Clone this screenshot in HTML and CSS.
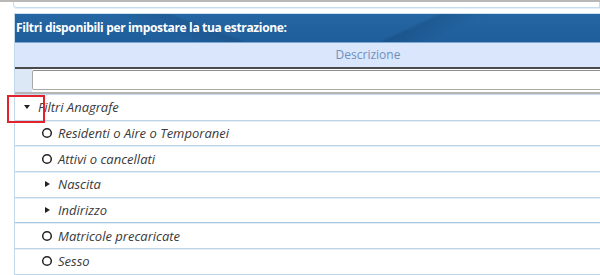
FILE: index.html
```html
<!DOCTYPE html>
<html lang="it">
<head>
	<meta charset="UTF-8">
	<title>Filtri estrazione</title>
	<link rel="stylesheet" href="styles.css">
</head>
<body>

	<div class="topline"></div>
	<div class="prevbox"></div>

	<div class="panel">
		<div class="panel-title">Filtri disponibili per impostare la tua estrazione:</div>
		<div class="col-head">Descrizione</div>
		<div class="filter-row">
			<div class="filter-cell"></div>
			<input class="filter-input" type="text">
		</div>

		<div class="tree">
			<div class="node lvl0"><span class="ico tri-down"></span><span class="label">Filtri Anagrafe</span></div>
			<div class="node lvl1"><svg class="ico" viewBox="0 0 12 12"><circle cx="6" cy="6" r="4.3" fill="none" stroke="#222" stroke-width="1.5"/></svg><span class="label">Residenti o Aire o Temporanei</span></div>
			<div class="node lvl1"><svg class="ico" viewBox="0 0 12 12"><circle cx="6" cy="6" r="4.3" fill="none" stroke="#222" stroke-width="1.5"/></svg><span class="label">Attivi o cancellati</span></div>
			<div class="node lvl1"><span class="ico tri-right"></span><span class="label">Nascita</span></div>
			<div class="node lvl1 strong"><span class="ico tri-right"></span><span class="label">Indirizzo</span></div>
			<div class="node lvl1"><svg class="ico" viewBox="0 0 12 12"><circle cx="6" cy="6" r="4.3" fill="none" stroke="#222" stroke-width="1.5"/></svg><span class="label">Matricole precaricate</span></div>
			<div class="node lvl1"><svg class="ico" viewBox="0 0 12 12"><circle cx="6" cy="6" r="4.3" fill="none" stroke="#222" stroke-width="1.5"/></svg><span class="label">Sesso</span></div>
		</div>
	</div>

	<div class="highlight"></div>

</body>
</html>
```

FILE: styles.css
```css
html, body {
	margin: 0;
	overflow: hidden;
}
body {
	font-family: "Open Sans", "Noto Sans", sans-serif;
	background: #fff;
	width: 600px;
	height: 275px;
	position: relative;
}
.topline {
	height: 2px;
	background: #b8b8b8;
}
.prevbox {
	margin-left: 13px;
	height: 5px;
	border: 1px solid #c7dbeb;
	border-top: none;
	border-bottom-left-radius: 4px;
	box-shadow: 0 1px 0 #e6f0f8;
}
.panel {
	margin-top: 5px;
	margin-left: 14px;
	width: 706px;
	border-left: 1px solid #c6d9ea;
	border-top: 1px solid #cfe0ef;
}
.panel-title {
	height: 28px;
	line-height: 27px;
	padding-left: 1px;
	color: #fff;
	font-weight: bold;
	font-size: 12px;
	letter-spacing: -0.35px;
	background:
		linear-gradient(155deg, transparent 55%, rgba(10,40,80,.18) 56%, transparent 62%),
		linear-gradient(200deg, transparent 70%, rgba(10,40,80,.15) 71%, transparent 78%),
		linear-gradient(180deg, #2466a3, #1f5e9a);
	border-bottom: 1px solid #7ea8d4;
}
.col-head {
	height: 24px;
	line-height: 24px;
	text-align: center;
	font-size: 12px;
	color: #7090bb;
	background: #d9e6fb;
	border-bottom: 2px solid #4a4a4a;
	box-shadow: 0 1px 0 #b9b9b9;
}
.filter-row {
	display: flex;
	height: 22px;
	padding-top: 1px;
	border-bottom: 2px solid #b5b5b5;
	box-shadow: 0 1px 0 #c9dcef;
	background: #fff;
}
.filter-cell {
	width: 17px;
	background: #dde8f6;
	margin-top: -1px;
}
.filter-input {
	flex: 1;
	height: 20px;
	box-sizing: border-box;
	margin: 0;
	border: 1px solid #a8a8a8;
	border-top-color: #8c8c8c;
	border-radius: 2px;
	background: #fff;
}
.tree {
	padding-top: 1px;
}
.node {
	display: flex;
	align-items: center;
	height: 24.7px;
	border-bottom: 1px solid #bdd5e8;
	box-shadow: 0 1px 0 #e2edf6;
	font-size: 13px;
	font-style: italic;
	color: #3a3a3a;
}
.node.strong {
	border-bottom-color: #a9c7df;
}
.lvl0 {
	padding-left: 6px;
}
.lvl1 {
	padding-left: 26px;
}
.ico {
	width: 12px;
	height: 12px;
	margin-right: 5px;
	display: flex;
	align-items: center;
	justify-content: center;
	flex-shrink: 0;
}
.tri-down::before {
	content: "";
	border-left: 3.5px solid transparent;
	border-right: 3.5px solid transparent;
	border-top: 4px solid #222;
}
.tri-right::before {
	content: "";
	border-top: 3.5px solid transparent;
	border-bottom: 3.5px solid transparent;
	border-left: 5px solid #222;
}
.label {
	white-space: nowrap;
}
.highlight {
	position: absolute;
	left: 7px;
	top: 95px;
	width: 34px;
	height: 24px;
	border: 2px solid #e3222b;
}
```
